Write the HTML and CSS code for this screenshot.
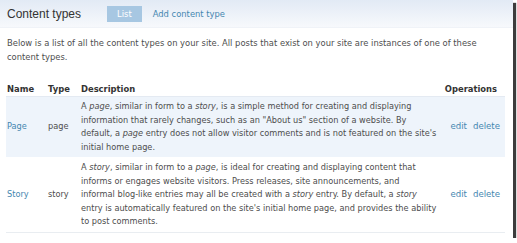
FILE: index.html
```html
<!DOCTYPE html>
<html lang="en">
<head>
    <meta charset="UTF-8">
    <title>Content types</title>
    <link rel="stylesheet" href="styles.css">
</head>
<body>
    <div class="frame">
        <!-- Cabecera -->
        <div class="page-head">
            <h1>Content types</h1>
            <div class="tabs">
                <span class="tab active">List</span>
                <a class="tab" href="#">Add content type</a>
            </div>
        </div>

        <p class="intro">Below is a list of all the content types on your site. All posts that exist on your site are instances of one of these content types.</p>

        <table class="types">
            <thead>
                <tr>
                    <th class="col-name">Name</th>
                    <th class="col-type">Type</th>
                    <th class="col-desc">Description</th>
                    <th class="col-ops">Operations</th>
                </tr>
            </thead>
            <tbody>
                <tr class="odd">
                    <td><a href="#">Page</a></td>
                    <td>page</td>
                    <td class="desc">A <em>page</em>, similar in form to a <em>story</em>, is a simple method for creating and displaying information that rarely changes, such as an "About us" section of a website. By default, a <em>page</em> entry does not allow visitor comments and is not featured on the site's initial home page.</td>
                    <td class="ops"><a href="#">edit</a><a href="#">delete</a></td>
                </tr>
                <tr class="even">
                    <td><a href="#">Story</a></td>
                    <td>story</td>
                    <td class="desc">A <em>story</em>, similar in form to a <em>page</em>, is ideal for creating and displaying content that informs or engages website visitors. Press releases, site announcements, and informal&nbsp;blog-like entries may all be created with a <em>story</em> entry. By default, a <em>story</em> entry is automatically featured on the site's initial home page, and provides the ability to post comments.</td>
                    <td class="ops"><a href="#">edit</a><a href="#">delete</a></td>
                </tr>
            </tbody>
        </table>
    </div>
</body>
</html>
```

FILE: styles.css
```css
/* Estilo global */
body {
    margin: 0;
    background: #ffffff;
    font-family: 'DejaVu Sans', Verdana, sans-serif;
    font-size: 8.2px;
    color: #4d4d4d;
}

a {
    color: #4587b0;
    text-decoration: none;
}

.frame {
    width: 513px;
    height: 238px;
    overflow: hidden;
    background: #ffffff;
    box-shadow: 3px 3px 1px #3c3c3c;
}

/* Cabecera */
.page-head {
    height: 28px;
    display: flex;
    align-items: center;
    padding-left: 7px;
    background: linear-gradient(#e2eaf5, #f7f9fc);
    border-bottom: 1px solid #f0f3f8;
    box-sizing: border-box;
}

.page-head h1 {
    margin: 0;
    font-family: 'Liberation Sans', Arial, sans-serif;
    font-size: 12px;
    font-weight: normal;
    color: #333333;
}

.tabs {
    display: flex;
    align-items: center;
    margin-left: 26px;
    gap: 11px;
}

.tab {
    font-size: 8.4px;
}

.tab.active {
    background: #a7c7e2;
    color: #ffffff;
    padding: 0 10px;
    line-height: 16px;
}

.intro {
    margin: 8px 20px 0 7px;
    font-size: 8.4px;
    line-height: 14px;
}

/* Tabla */
.types {
    margin: 18px 0 0 6px;
    width: 499px;
    border-collapse: collapse;
    table-layout: fixed;
}

.types th {
    text-align: left;
    font-weight: bold;
    font-size: 8.4px;
    color: #333333;
    line-height: 14px;
    padding: 0 1px;
    border-bottom: 1px solid #e4eaf2;
}

.col-name { width: 39px; }
.col-type { width: 31px; }
.col-ops { width: 56px; }

.types th.col-ops {
    text-align: right;
    padding-right: 8px;
}

.types td {
    line-height: 13.5px;
    padding: 3px 1px;
    vertical-align: middle;
}

.types td.desc {
    padding-right: 1px;
}

.types tr.odd td {
    background: #eef4fb;
    border-bottom: 1px solid #ffffff;
}

.types tr.even td {
    border-bottom: 1px solid #e9edf1;
}

.types td.ops {
    white-space: nowrap;
    text-align: right;
    padding-right: 5px;
    font-size: 8.6px;
}

.ops a {
    margin-left: 6px;
}
```
